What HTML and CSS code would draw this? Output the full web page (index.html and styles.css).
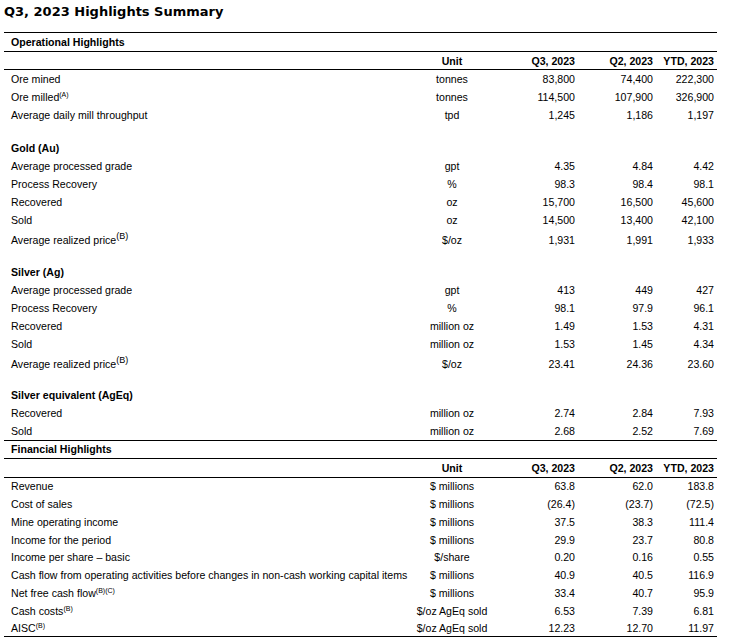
FILE: index.html
```html
<!DOCTYPE html>
<html>
<head>
<meta charset="utf-8">
<title>Q3, 2023 Highlights Summary</title>
<link rel="stylesheet" href="styles.css">
</head>
<body>
<h1 class="title">Q3, 2023 Highlights Summary</h1>
<div class="sheet">
  <div class="row sec"><div class="lbl b">Operational Highlights</div></div>
  <div class="row hdr"><div></div><div class="unit b">Unit</div><div class="num b">Q3, 2023</div><div class="num b">Q2, 2023</div><div class="num b">YTD, 2023</div></div>

  <div class="row r19"><div class="lbl">Ore mined</div><div class="unit">tonnes</div><div class="num">83,800</div><div class="num">74,400</div><div class="num">222,300</div></div>
  <div class="row r19"><div class="lbl">Ore milled<sup class="s">(A)</sup></div><div class="unit">tonnes</div><div class="num">114,500</div><div class="num">107,900</div><div class="num">326,900</div></div>
  <div class="row r19"><div class="lbl">Average daily mill throughput</div><div class="unit">tpd</div><div class="num">1,245</div><div class="num">1,186</div><div class="num">1,197</div></div>
  <div class="gap g1"></div>

  <div class="row"><div class="lbl b">Gold (Au)</div></div>
  <div class="row"><div class="lbl">Average processed grade</div><div class="unit">gpt</div><div class="num">4.35</div><div class="num">4.84</div><div class="num">4.42</div></div>
  <div class="row"><div class="lbl">Process Recovery</div><div class="unit">%</div><div class="num">98.3</div><div class="num">98.4</div><div class="num">98.1</div></div>
  <div class="row"><div class="lbl">Recovered</div><div class="unit">oz</div><div class="num">15,700</div><div class="num">16,500</div><div class="num">45,600</div></div>
  <div class="row"><div class="lbl">Sold</div><div class="unit">oz</div><div class="num">14,500</div><div class="num">13,400</div><div class="num">42,100</div></div>
  <div class="row tall"><div class="lbl">Average realized price<sup class="sb">(B)</sup></div><div class="unit">$/oz</div><div class="num">1,931</div><div class="num">1,991</div><div class="num">1,933</div></div>
  <div class="gap g2"></div>

  <div class="row"><div class="lbl b">Silver (Ag)</div></div>
  <div class="row"><div class="lbl">Average processed grade</div><div class="unit">gpt</div><div class="num">413</div><div class="num">449</div><div class="num">427</div></div>
  <div class="row"><div class="lbl">Process Recovery</div><div class="unit">%</div><div class="num">98.1</div><div class="num">97.9</div><div class="num">96.1</div></div>
  <div class="row"><div class="lbl">Recovered</div><div class="unit">million oz</div><div class="num">1.49</div><div class="num">1.53</div><div class="num">4.31</div></div>
  <div class="row"><div class="lbl">Sold</div><div class="unit">million oz</div><div class="num">1.53</div><div class="num">1.45</div><div class="num">4.34</div></div>
  <div class="row tall"><div class="lbl">Average realized price<sup class="sb">(B)</sup></div><div class="unit">$/oz</div><div class="num">23.41</div><div class="num">24.36</div><div class="num">23.60</div></div>
  <div class="gap g3"></div>

  <div class="row"><div class="lbl b">Silver equivalent (AgEq)</div></div>
  <div class="row"><div class="lbl">Recovered</div><div class="unit">million oz</div><div class="num">2.74</div><div class="num">2.84</div><div class="num">7.93</div></div>
  <div class="row last"><div class="lbl">Sold</div><div class="unit">million oz</div><div class="num">2.68</div><div class="num">2.52</div><div class="num">7.69</div></div>

  <div class="row sec sec2"><div class="lbl b">Financial Highlights</div></div>
  <div class="row hdr hdr2"><div></div><div class="unit b">Unit</div><div class="num b">Q3, 2023</div><div class="num b">Q2, 2023</div><div class="num b">YTD, 2023</div></div>

  <div class="row fin"><div class="lbl">Revenue</div><div class="unit">$ millions</div><div class="num">63.8</div><div class="num">62.0</div><div class="num">183.8</div></div>
  <div class="row fin"><div class="lbl">Cost of sales</div><div class="unit">$ millions</div><div class="num">(26.4)</div><div class="num">(23.7)</div><div class="num">(72.5)</div></div>
  <div class="row fin"><div class="lbl">Mine operating income</div><div class="unit">$ millions</div><div class="num">37.5</div><div class="num">38.3</div><div class="num">111.4</div></div>
  <div class="row fin"><div class="lbl">Income for the period</div><div class="unit">$ millions</div><div class="num">29.9</div><div class="num">23.7</div><div class="num">80.8</div></div>
  <div class="row fin"><div class="lbl">Income per share – basic</div><div class="unit">$/share</div><div class="num">0.20</div><div class="num">0.16</div><div class="num">0.55</div></div>
  <div class="row fin"><div class="lbl">Cash flow from operating activities before changes in non-cash working capital items</div><div class="unit">$ millions</div><div class="num">40.9</div><div class="num">40.5</div><div class="num">116.9</div></div>
  <div class="row fin"><div class="lbl">Net free cash flow<sup class="s">(B)(C)</sup></div><div class="unit">$ millions</div><div class="num">33.4</div><div class="num">40.7</div><div class="num">95.9</div></div>
  <div class="row fin"><div class="lbl">Cash costs<sup class="s">(B)</sup></div><div class="unit">$/oz AgEq sold</div><div class="num">6.53</div><div class="num">7.39</div><div class="num">6.81</div></div>
  <div class="row end"><div class="lbl">AISC<sup class="s">(B)</sup></div><div class="unit">$/oz AgEq sold</div><div class="num">12.23</div><div class="num">12.70</div><div class="num">11.97</div></div>
</div>
</body>
</html>
```

FILE: styles.css
```css
html, body {
  margin: 0;
  padding: 0;
  background: #ffffff;
  color: #000000;
}

body {
  font-family: "Liberation Sans", Arial, sans-serif;
  font-size: 10.6px;
}

.title {
  margin: 0;
  height: 32px;
  box-sizing: border-box;
  padding: 4px 0 0 4px;
  font-family: "DejaVu Sans", Verdana, sans-serif;
  font-size: 13px;
  font-weight: bold;
  line-height: 16px;
}

.sheet {
  margin-left: 4px;
  width: 713px;
}

.row {
  display: grid;
  grid-template-columns: 406px 84px 84px 78px 61px;
  height: 18px;
  align-items: center;
  white-space: nowrap;
}

.r19 {
  height: 18.2px;
}

.fin {
  height: 17.75px;
}

.tall {
  height: 20px;
  align-items: end;
  padding-bottom: 3px;
  box-sizing: border-box;
}

.last {
  height: 18px;
}

.end {
  height: 16px;
  box-sizing: content-box;
  border-bottom: 1px solid #000;
}

.sec {
  height: 18px;
  border-top: 1px solid #000;
  border-bottom: 1px solid #000;
}

.sec2 {
  height: 17px;
}

.hdr {
  height: 17px;
  border-bottom: 1px solid #000;
}

.hdr2 {
  height: 18px;
}

.lbl {
  padding-left: 7px;
  overflow: visible;
}

.unit {
  text-align: center;
}

.num {
  text-align: right;
  padding-right: 3px;
}

.b {
  font-weight: bold;
}

.gap {
  height: 14px;
}

.g1 { height: 14px; }
.g2 { height: 14px; }
.g3 { height: 13px; }

sup {
  line-height: 0;
  position: relative;
  vertical-align: baseline;
}

.s {
  font-size: 7px;
  top: -4px;
}

.sb {
  font-size: 9px;
  top: -5px;
}
```
